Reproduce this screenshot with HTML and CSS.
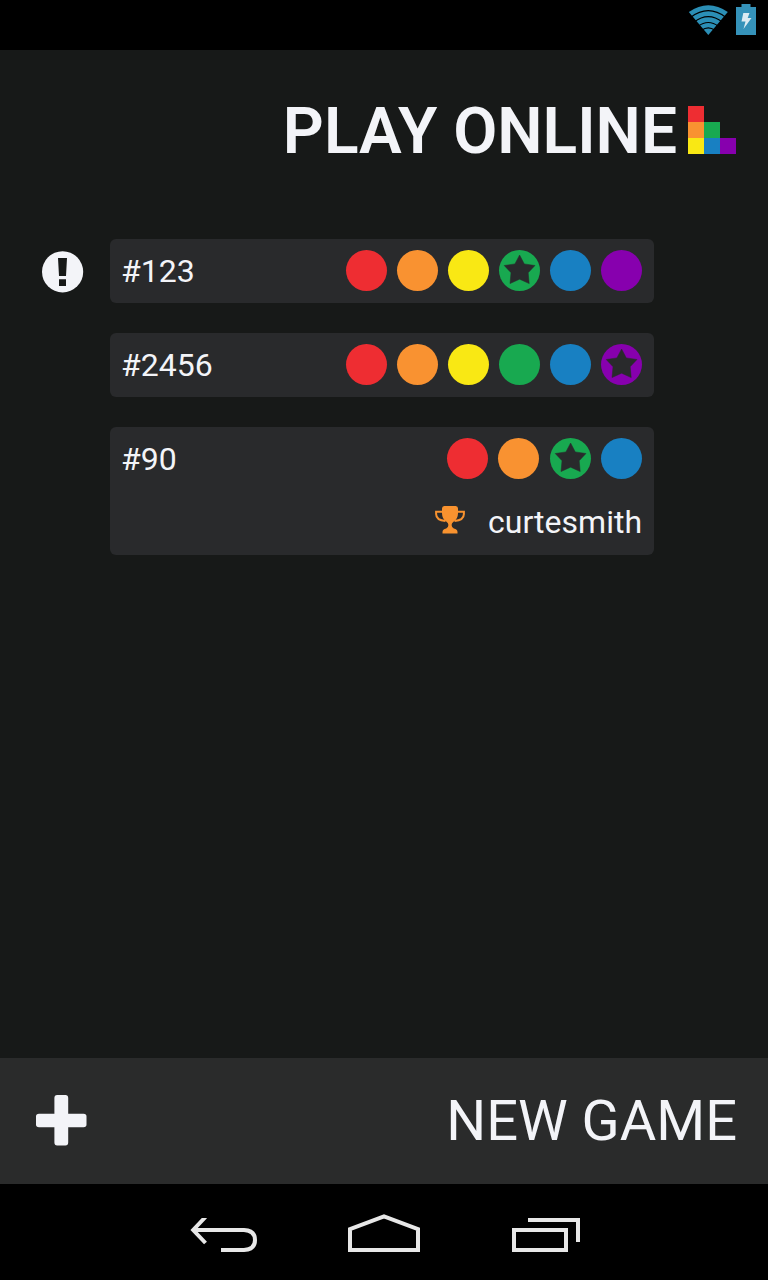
FILE: index.html
```html
<!DOCTYPE html>
<html lang="en">
<head>
<meta charset="utf-8">
<title>Play Online</title>
<link rel="stylesheet" href="styles.css">
</head>
<body>
<svg class="defs" width="0" height="0" aria-hidden="true">
  <symbol id="star" viewBox="0 0 41 41"><path d="M20.6 5 25.3 13.9 36 15.5 29.2 22.7 30.2 33.6 20.6 29.2 11 33.6 12 22.7 5.2 15.5 15.9 13.9Z" fill="#292a2c" stroke="#292a2c" stroke-width=".5" stroke-linejoin="round"/></symbol>
</svg>
<div class="screen">
  <header class="status">
    <svg class="wifi" width="40" height="32" viewBox="0 0 40 32">
      <path d="M.8 8Q20.3-5.6 39.8 8L20.3 31Z" fill="#2b8fb6"/>
      <path d="M2.5 13.4Q20.3-.1 38 13.4M6 18.2Q20.3 7 34.5 18.2M10 22.4Q20.3 14.6 30.5 22.4M13.5 26.2Q20.3 21.4 27 26.2" fill="none" stroke="#000" stroke-width="1.2"/>
    </svg>
    <svg class="battery" width="20" height="31" viewBox="0 0 20 31">
      <path d="M5.5 0H14.5V3H20V31H0V3H5.5Z" fill="#3592b9"/>
      <path d="M7.3 9H13.5L11.7 14H15.5L7.5 25 9.5 17.5H5.5Z" fill="#dcebf2"/>
    </svg>
  </header>
  <main class="content">
    <div class="heading">
      <h1 class="title">PLAY ONLINE</h1>
      <div class="logo">
        <i class="red"></i><i></i><i></i>
        <i class="orange"></i><i class="green"></i><i></i>
        <i class="yellow"></i><i class="blue"></i><i class="purple"></i>
      </div>
    </div>
    <ul class="games">
      <li class="entry">
        <svg class="alert" width="42" height="42" viewBox="0 0 42 42"><circle cx="20.6" cy="20.8" r="20.6" fill="#f3f4f8"/><path d="M16 7H25L24 25H17ZM17 28.2H24V35H17Z" fill="#171918"/></svg>
        <div class="card">
          <div class="line"><span class="id">#123</span>
            <div class="dots"><b class="red"></b><b class="orange"></b><b class="yellow"></b><b class="green"><svg class="star"><use href="#star"/></svg></b><b class="blue"></b><b class="purple"></b></div>
          </div>
        </div>
      </li>
      <li class="entry">
        <div class="card">
          <div class="line"><span class="id">#2456</span>
            <div class="dots"><b class="red"></b><b class="orange"></b><b class="yellow"></b><b class="green"></b><b class="blue"></b><b class="purple"><svg class="star"><use href="#star"/></svg></b></div>
          </div>
        </div>
      </li>
      <li class="entry">
        <div class="card">
          <div class="line"><span class="id">#90</span>
            <div class="dots short"><b class="red"></b><b class="orange"></b><b class="green"><svg class="star"><use href="#star"/></svg></b><b class="blue"></b></div>
          </div>
          <div class="line winner">
            <svg class="trophy" width="30" height="28" viewBox="0 0 30 28">
              <path d="M7.3 5.8H1.1V8Q1.1 14.2 10.5 15M22.7 5.8H28.9V8Q28.9 14.2 19.5 15" fill="none" stroke="#f8922f" stroke-width="2"/>
              <path d="M9.3 0H20.7Q23 0 23 2.5V7.5Q22.8 13.3 18.5 15.8 16.6 17.2 16.6 19 16.6 21.4 18.8 22.5 22.5 23.3 22.5 26V27.5H7.5V26Q7.5 23.3 11.2 22.5 13.4 21.4 13.4 19 13.4 17.2 11.5 15.8 7.2 13.3 7 7.5V2.5Q7 0 9.3 0Z" fill="#f8922f"/>
            </svg>
            <span class="name">curtesmith</span>
          </div>
        </div>
      </li>
    </ul>
  </main>
  <footer class="new-game">
    <svg class="plus" width="51" height="51" viewBox="0 0 51 51"><path d="M21.2 0H29.4Q32.2 0 32.2 3V18.7H47.5Q50.5 18.7 50.5 21.5V29.5Q50.5 32.3 47.5 32.3H32.2V47.5Q32.2 50.5 29.4 50.5H21.2Q18.4 50.5 18.4 47.5V32.3H3Q0 32.3 0 29.5V21.5Q0 18.7 3 18.7H18.4V3Q18.4 0 21.2 0Z" fill="#f3f4f8"/></svg>
    <span class="new-label">NEW GAME</span>
  </footer>
  <nav class="nav">
    <svg class="back" width="68" height="36" viewBox="0 0 68 36"><path d="M15.5-1 3.2 12 15.5 25M3 12H54Q65 12.5 65 22 65 31.5 54 32H31" fill="none" stroke="#e7e7e7" stroke-width="4"/></svg>
    <svg class="home" width="72" height="39" viewBox="0 0 72 39"><path d="M2 36V15.2L36 2.4 70 15.2V36Z" fill="none" stroke="#e7e7e7" stroke-width="4"/></svg>
    <svg class="recent" width="68" height="34" viewBox="0 0 68 34"><path d="M2 12H54V32H2ZM16 2H66V24" fill="none" stroke="#e7e7e7" stroke-width="4"/></svg>
  </nav>
</div>
</body>
</html>
```
FILE: styles.css
```css
* { box-sizing: border-box; }
body { margin: 0; background: #000; }
.defs { display: block; }
.screen {
  display: flex;
  flex-direction: column;
  width: 768px;
  height: 1280px;
  color: #f3f4f8;
  background: #171918;
  font-family: Roboto, "Liberation Sans", sans-serif;
}
svg { flex: none; display: block; }
.red { background: #ee2d32; }
.orange { background: #f99231; }
.yellow { background: #f9e814; }
.green { background: #18a950; }
.blue { background: #1880c2; }
.purple { background: #8700ae; }
.status {
  display: flex;
  justify-content: flex-end;
  gap: 8px;
  height: 50px;
  padding: 4px 12px 0 0;
  background: #000;
}
.content { flex: 1; }
.heading {
  display: flex;
  justify-content: flex-end;
  padding: 56px 32px 0 0;
  height: 189px;
  gap: 11px;
}
.title { margin: -12px 0 0; font-size: 64px; line-height: 75px; font-weight: 600; white-space: nowrap; }
.logo { display: grid; grid-template-columns: repeat(3, 16px); grid-template-rows: repeat(3, 16px); width: 48px; height: 48px; }
.games {
  display: flex;
  flex-direction: column;
  gap: 30px;
  margin: 0;
  padding: 0 114px 0 42px;
  list-style: none;
}
.entry { display: flex; justify-content: flex-end; }
.alert { margin: 12px 26px 0 0; }
.card { width: 544px; border-radius: 6px; background: #292a2c; }
.line {
  display: flex;
  align-items: center;
  justify-content: space-between;
  height: 64px;
  padding: 0 12px 0 11px;
  font-size: 32px;
}
.id { margin-top: -1px; }
.name { margin-top: -3px; }
.dots { display: flex; gap: 10px; margin-top: -1px; }
.dots b { width: 41px; height: 41px; border-radius: 50%; }
.short .orange { margin-right: 1px; }
.star { width: 41px; height: 41px; }
.winner { justify-content: flex-end; gap: 23px; }
.trophy { margin-top: -6px; }
.new-game {
  display: flex;
  align-items: center;
  justify-content: space-between;
  height: 126px;
  padding: 0 31px 0 36px;
  background: #2a2b2b;
}
.plus { margin-top: -1px; }
.new-label { font-size: 56px; line-height: 66px; }
.nav {
  display: flex;
  align-items: flex-start;
  height: 96px;
  padding: 30px 0 0 190px;
  background: #000;
}
.back { margin-top: 4px; }
.home { margin-left: 90px; }
.recent { margin: 4px 0 0 92px; }
```
